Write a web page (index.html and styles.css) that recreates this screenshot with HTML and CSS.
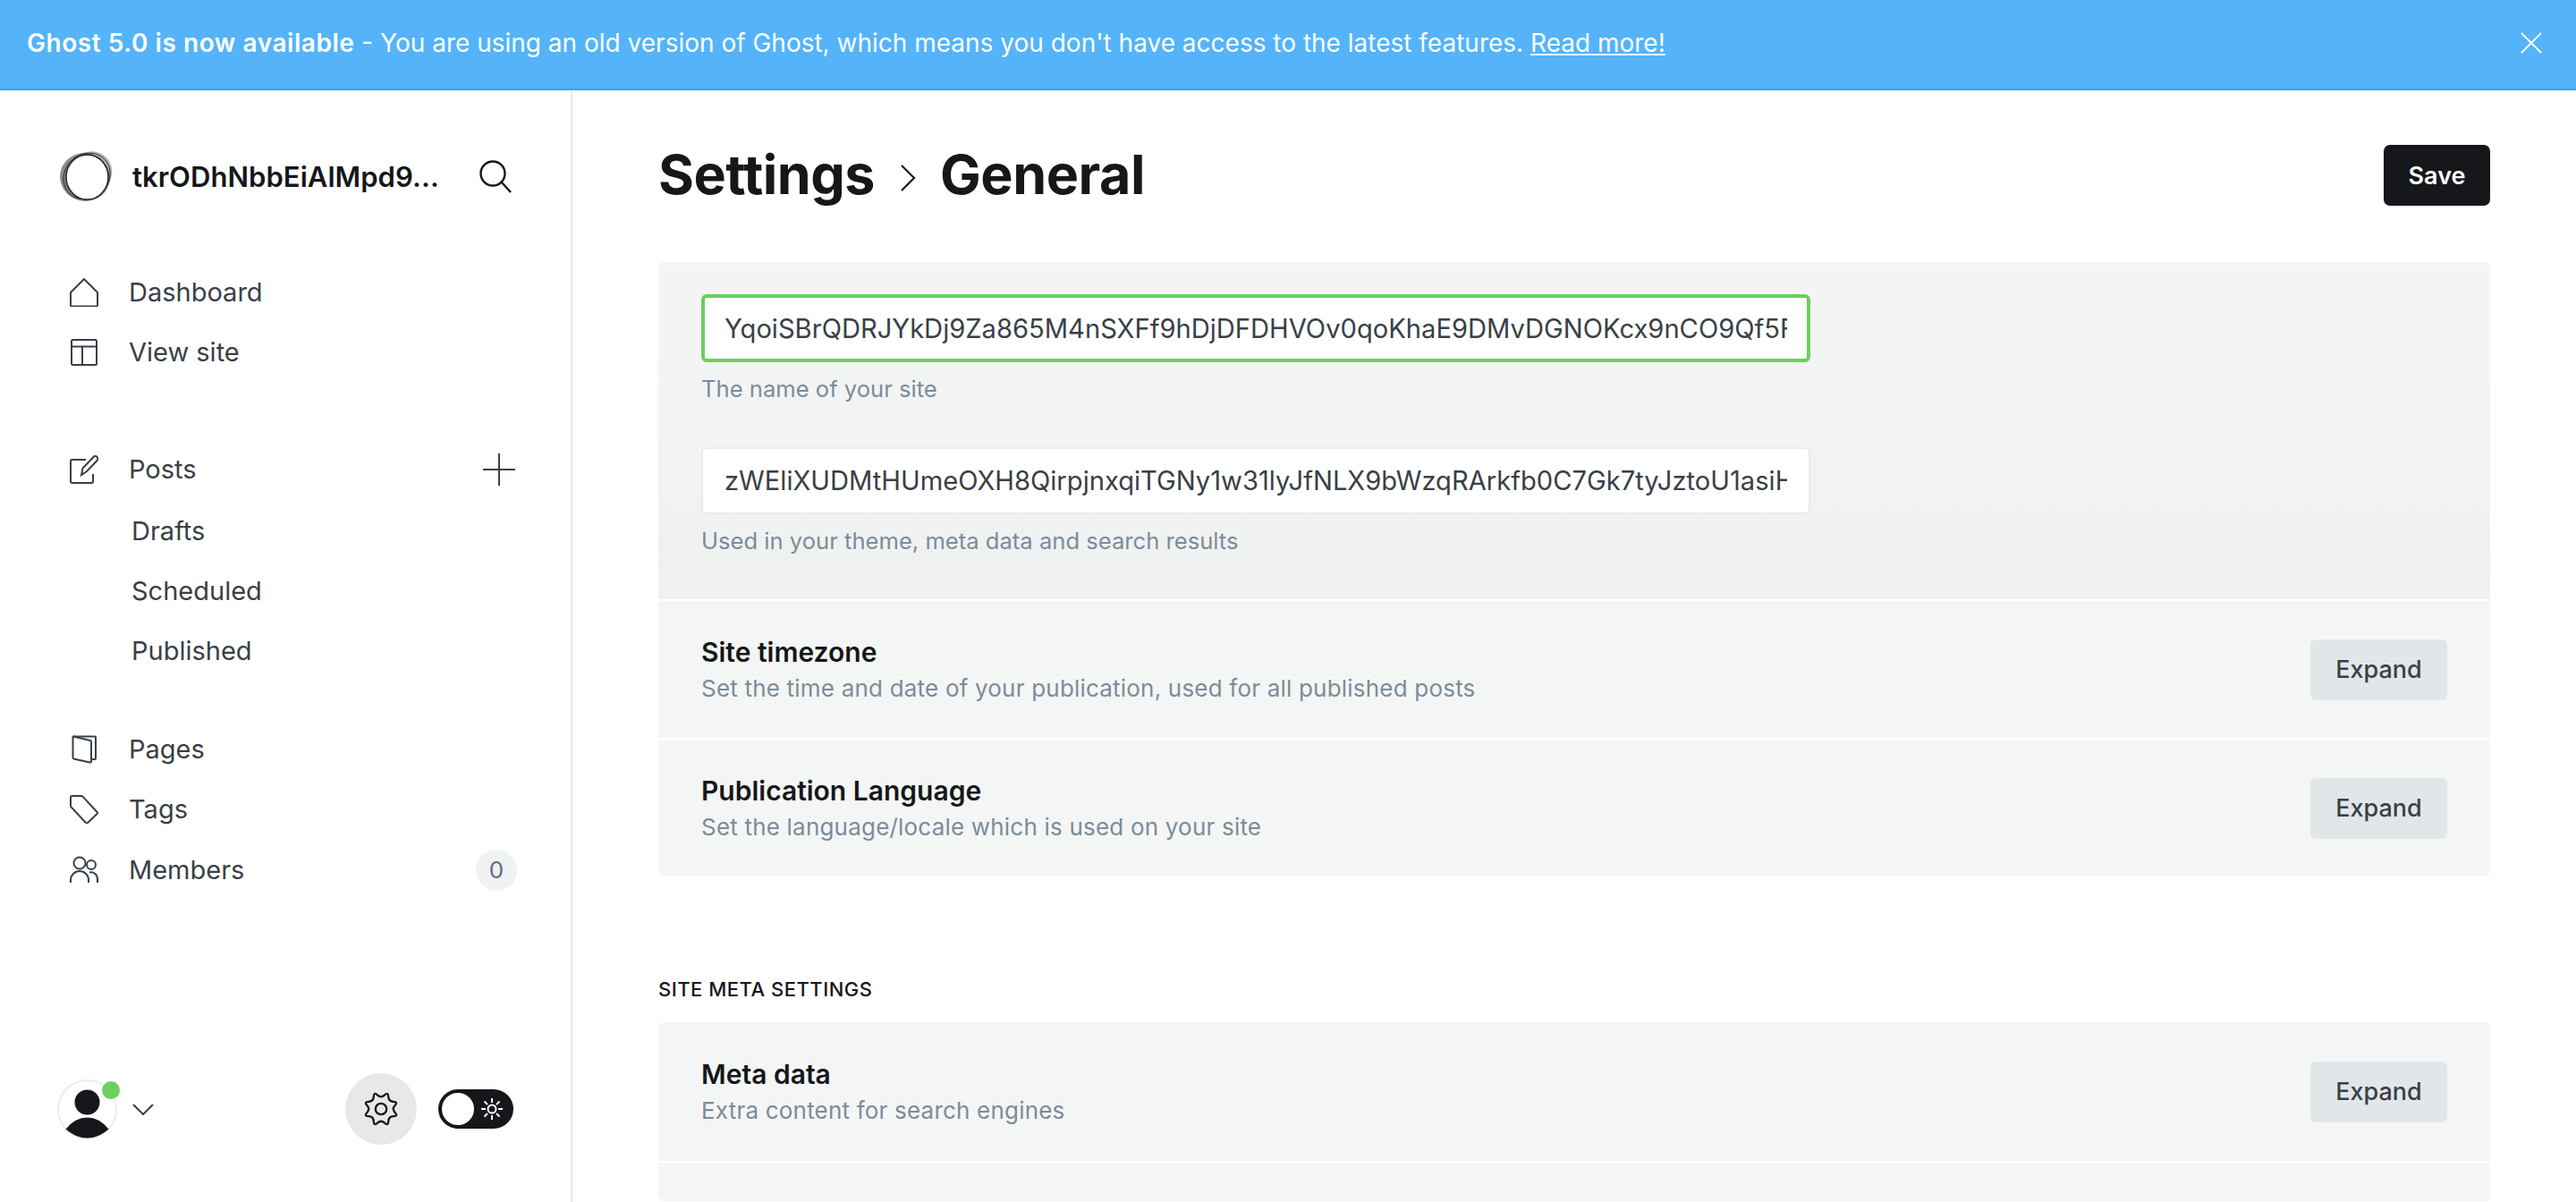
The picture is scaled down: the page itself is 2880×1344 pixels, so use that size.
FILE: index.html
```
<!DOCTYPE html>
<html lang="en">
  <head>
    <meta charset="UTF-8" />
    <title>Settings - General</title>
    <link rel="stylesheet" href="styles.css">
  </head>
  <body>
    <div class="banner">
      <p class="banner-text"><strong>Ghost 5.0 is now available</strong> - You are using an old version of Ghost, which means you don't have access to the latest features. <a href="#">Read more!</a></p>
      <svg class="banner-close" viewBox="0 0 24 24"><path d="M1 1l22 22M23 1L1 23"/></svg>
    </div>

    <div class="app">
      <nav class="sidebar">
        <div class="brand">
          <svg class="brand-logo" viewBox="0 0 60 60">
            <ellipse cx="32" cy="29" rx="29" ry="25" transform="rotate(-42 32 29)" fill="#b4b4b4"/>
            <ellipse cx="29" cy="31" rx="28" ry="27" transform="rotate(15 29 31)" fill="#6f6f6f" opacity=".8"/>
            <ellipse cx="31" cy="30" rx="27.500" ry="24.500" transform="rotate(-42 31 30)" fill="none" stroke="#2c2c2c" stroke-width=".9"/>
            <ellipse cx="31.500" cy="31" rx="23.500" ry="25" fill="#fff" stroke="#232427" stroke-width="1.500"/>
          </svg>
          <span class="brand-name">tkrODhNbbEiAlMpd9...</span>
          <svg class="brand-search" viewBox="0 0 36 37"><circle cx="15" cy="15" r="13.500"/><path d="M25 25l10 11"/></svg>
        </div>

        <ul class="menu">
          <li class="menu-item">
            <svg viewBox="0 0 32 32"><path d="M16 1L31 16v14a1.500 1.500 0 0 1-1.500 1.500h-27A1.500 1.500 0 0 1 1 30V16z"/></svg>
            <span>Dashboard</span>
          </li>
          <li class="menu-item">
            <svg viewBox="0 0 32 32"><rect x="2" y="2" width="28" height="28" rx="1.500"/><path d="M2 9.500h28M14 9.500V30"/></svg>
            <span>View site</span>
          </li>
        </ul>

        <ul class="menu menu-posts">
          <li class="menu-item menu-head">
            <svg viewBox="0 0 32 32"><path d="M18 5H2.500A1.500 1.500 0 0 0 1 6.500v23A1.500 1.500 0 0 0 2.500 31h22a1.500 1.500 0 0 0 1.500-1.500V21"/><path d="M13 22l1.500-7.500L26.500 2c1-1.200 3-1.200 4 0s1 2.800 0 4L19 18z"/></svg>
            <span>Posts</span>
            <svg class="menu-plus" viewBox="0 0 36 36"><path d="M18 0v36M0 18h36"/></svg>
          </li>
          <li class="menu-item menu-sub"><span>Drafts</span></li>
          <li class="menu-item menu-sub"><span>Scheduled</span></li>
          <li class="menu-item menu-sub"><span>Published</span></li>
        </ul>

        <ul class="menu">
          <li class="menu-item">
            <svg viewBox="0 0 32 32"><path d="M4 1.500h24a1 1 0 0 1 1 1V26a1 1 0 0 1-1 1h-4"/><path d="M4 1.500l19 4.500a1.500 1.500 0 0 1 1 1.500v22a1.200 1.200 0 0 1-1.500 1L4.500 26.500A1.500 1.500 0 0 1 3.500 25V2z"/></svg>
            <span>Pages</span>
          </li>
          <li class="menu-item">
            <svg viewBox="0 0 32 32"><path d="M2.500 1h10.500a2 2 0 0 1 1.500.7L30.500 19a1.500 1.500 0 0 1 0 2L20 31a1.500 1.500 0 0 1-2 0L1.700 13.500a2 2 0 0 1-.7-1.500V2.500A1.500 1.500 0 0 1 2.500 1z"/></svg>
            <span>Tags</span>
          </li>
          <li class="menu-item menu-members">
            <svg viewBox="0 0 32 32"><circle cx="11" cy="8" r="6.500"/><path d="M1 30v-3a10 10 0 0 1 20 0v3"/><circle cx="24" cy="10" r="5"/><path d="M22 18.500c5-1 9 2.500 9 7.500v4"/></svg>
            <span>Members</span>
            <span class="menu-count">0</span>
          </li>
        </ul>

        <div class="sidebar-foot">
          <div class="avatar">
            <svg viewBox="0 0 67 67">
              <circle cx="33.500" cy="33.500" r="32.500" fill="#fff" stroke="#ececec" stroke-width="2"/>
              <circle cx="33.500" cy="25.500" r="14" fill="#15171a"/>
              <path d="M9.500 55.500Q20 42.500 33.500 42.500T57.500 55.500Q46 65.500 33.500 65.500T9.500 55.500z" fill="#15171a"/>
            </svg>
            <span class="avatar-dot"></span>
          </div>
          <svg class="foot-chevron" viewBox="0 0 24 13"><path d="M1 1l11 11L23 1"/></svg>
          <span class="foot-gear">
            <svg viewBox="-1 -1 42 42"><circle cx="20" cy="20" r="6.500"/><path d="M15.790 3.585Q20 7.500 24.210 3.585Q28.420 -.33 28.630 5.415Q28.840 11.160 34.585 11.370Q40.330 11.580 36.415 15.790Q32.500 20 36.415 24.210Q40.330 28.420 34.585 28.630Q28.840 28.840 28.630 34.585Q28.420 40.330 24.210 36.415Q20 32.500 15.790 36.415Q11.580 40.330 11.370 34.585Q11.160 28.840 5.415 28.630Q-.33 28.420 3.585 24.210Q7.500 20 3.585 15.790Q-.33 11.580 5.415 11.370Q11.160 11.160 11.370 5.415Q11.580 -.33 15.790 3.585z"/></svg>
          </span>
          <span class="foot-toggle">
            <span class="toggle-knob"></span>
            <svg viewBox="0 0 24 24"><circle cx="12" cy="12" r="4.500"/><path d="M12 0v5M12 19v5M0 12h5M19 12h5M3.500 3.500l3.500 3.500M17 17l3.500 3.500M3.500 20.500L7 17M17 7l3.500-3.500"/></svg>
          </span>
        </div>
      </nav>

      <main class="content">
        <header class="page-head">
          <h1 class="page-title">Settings <svg viewBox="0 0 18 30"><path d="M2 1l14 14L2 29"/></svg> General</h1>
          <button class="btn-save">Save</button>
        </header>

        <section class="panel">
          <div class="panel-open">
            <input class="field field-focus" type="text" value="YqoiSBrQDRJYkDj9Za865M4nSXFf9hDjDFDHVOv0qoKhaE9DMvDGNOKcx9nCO9Qf5FaB">
            <p class="field-help">The name of your site</p>
            <input class="field field-second" type="text" value="zWEliXUDMtHUmeOXH8QirpjnxqiTGNy1w31lyJfNLX9bWzqRArkfb0C7Gk7tyJztoU1asiHq">
            <p class="field-help">Used in your theme, meta data and search results</p>
          </div>
          <div class="row">
            <div>
              <h4 class="row-title">Site timezone</h4>
              <p class="row-desc">Set the time and date of your publication, used for all published posts</p>
            </div>
            <button class="btn-expand">Expand</button>
          </div>
          <div class="row">
            <div>
              <h4 class="row-title">Publication Language</h4>
              <p class="row-desc">Set the language/locale which is used on your site</p>
            </div>
            <button class="btn-expand">Expand</button>
          </div>
        </section>

        <h3 class="section-label">SITE META SETTINGS</h3>

        <section class="panel">
          <div class="row">
            <div>
              <h4 class="row-title">Meta data</h4>
              <p class="row-desc">Extra content for search engines</p>
            </div>
            <button class="btn-expand">Expand</button>
          </div>
          <div class="row row-stub"></div>
        </section>
      </main>
    </div>
  </body>
</html>
```

FILE: styles.css
```
*{
  box-sizing: border-box;
}
html, body{
  height: 100%;
}
body{
  margin: 0;
  display: flex;
  flex-direction: column;
  overflow: hidden;
  background: #fff;
  color: #15171a;
  font-family: Inter, "Noto Sans", sans-serif;
}
p, h1, h3, h4, ul{
  margin: 0;
  padding: 0;
}
ul{
  list-style: none;
}
button{
  border: none;
  font-family: inherit;
  cursor: pointer;
}

/* top banner */
.banner{
  flex: none;
  height: 101px;
  display: flex;
  align-items: center;
  justify-content: space-between;
  padding: 0 38px 3px 30px;
  background: #54b3f9;
  border-bottom: 2px solid #4a9fdf;
  color: #fff;
}
.banner-text{
  font-size: 28px;
}
.banner-text strong{
  font-weight: 600;
  letter-spacing: .55px;
}
.banner-text a{
  color: #fff;
}
.banner-close{
  width: 24px;
  height: 24px;
  fill: none;
  stroke: #fff;
  stroke-width: 1.800;
}

.app{
  flex: 1;
  display: flex;
  min-height: 0;
}

/* sidebar */
.sidebar{
  flex: none;
  width: 640px;
  display: flex;
  flex-direction: column;
  padding: 66px 64px 64px 66px;
  border-right: 2px solid #e8e8e8;
}
.brand{
  display: flex;
  align-items: center;
  height: 60px;
  margin-bottom: 66px;
}
.brand-logo{
  width: 60px;
  height: 60px;
  flex: none;
}
.brand-name{
  margin-left: 22px;
  font-size: 31px;
  font-weight: 600;
  letter-spacing: .05px;
}
.brand-search{
  width: 36px;
  height: 37px;
  margin-left: auto;
  margin-right: 2px;
  fill: none;
  stroke: #15171a;
  stroke-width: 2.400;
}
.menu{
  margin-bottom: 64px;
}
.menu-posts{
  margin-bottom: 43px;
}
.menu-item{
  display: flex;
  align-items: center;
  height: 67px;
  padding-left: 12px;
  font-size: 29px;
  color: #394047;
}
.menu-head{
  height: 69px;
  padding-bottom: 2px;
}
.menu-members{
  margin-top: 1px;
}
.menu-item svg{
  width: 32px;
  height: 32px;
  flex: none;
  margin-right: 34px;
  fill: none;
  stroke: #394047;
  stroke-width: 2;
}
.menu-item svg.menu-plus{
  width: 36px;
  height: 36px;
  margin: 0 -2px 0 auto;
}
.menu-sub{
  padding-left: 81px;
}
.menu-count{
  margin-left: auto;
  margin-right: -4px;
  width: 46px;
  height: 46px;
  border-radius: 50%;
  background: #eff1f3;
  color: #626d79;
  font-size: 26px;
  display: flex;
  align-items: center;
  justify-content: center;
}
.sidebar-foot{
  margin-top: auto;
  display: flex;
  align-items: center;
  height: 80px;
  margin-left: -2px;
}
.avatar{
  position: relative;
  width: 67px;
  height: 67px;
  flex: none;
}
.avatar svg{
  display: block;
  width: 67px;
  height: 67px;
}
.avatar-dot{
  position: absolute;
  top: 2px;
  right: -3px;
  width: 20px;
  height: 20px;
  border-radius: 50%;
  background: #6bd05e;
}
.foot-chevron{
  width: 24px;
  height: 13px;
  margin-left: 17px;
  fill: none;
  stroke: #394047;
  stroke-width: 2;
}
.foot-gear{
  width: 80px;
  height: 80px;
  margin-left: auto;
  border-radius: 50%;
  background: #e7e8ea;
  display: flex;
  align-items: center;
  justify-content: center;
}
.foot-gear svg{
  width: 40px;
  height: 40px;
  fill: none;
  stroke: #15171a;
  stroke-width: 2.400;
}
.foot-toggle{
  width: 84px;
  height: 44px;
  margin-left: 24px;
  padding: 0 12px 0 4px;
  border-radius: 22px;
  background: #15171a;
  display: flex;
  align-items: center;
  justify-content: space-between;
}
.toggle-knob{
  width: 36px;
  height: 36px;
  border-radius: 50%;
  background: #fff;
}
.foot-toggle svg{
  width: 24px;
  height: 24px;
  fill: none;
  stroke: #fff;
  stroke-width: 2;
}

/* main column */
.content{
  flex: 1;
  min-width: 0;
  padding: 61px 96px 0;
}
.page-head{
  display: flex;
  align-items: center;
  justify-content: space-between;
  height: 68px;
  margin-bottom: 63px;
}
.page-title{
  display: flex;
  align-items: center;
  margin-top: -3px;
  font-size: 61px;
  font-weight: 700;
  letter-spacing: -.5px;
}
.page-title svg{
  width: 18px;
  height: 30px;
  margin: 8px 27px 0 28px;
  fill: none;
  stroke: #15171a;
  stroke-width: 2.200;
}
.btn-save{
  width: 119px;
  height: 68px;
  border-radius: 7px;
  background: #15171a;
  color: #fff;
  font-size: 27px;
  font-weight: 600;
}
.panel{
  border-radius: 6px;
  overflow: hidden;
}
.panel-open{
  height: 377px;
  padding: 36px 48px 0;
  background: linear-gradient(#f4f6f5, #eff1f0);
}
.field{
  display: block;
  width: 1240px;
  height: 76px;
  padding: 0 24px;
  border: 2px solid #e9ebea;
  border-radius: 6px;
  outline: none;
  background: #fff;
  color: #394047;
  font-family: inherit;
  font-size: 29.150px;
}
.field-focus{
  padding: 0 22px;
  border: 4px solid #6bd05e;
}
.field-second{
  height: 75px;
  margin-top: 50px;
}
.field-help{
  margin-top: 15px;
  font-size: 25.600px;
  line-height: 30px;
  color: #7c8b9a;
}
.row{
  display: flex;
  align-items: center;
  justify-content: space-between;
  height: 153px;
  margin-top: 2px;
  padding: 0 48px;
  background: #f4f6f5;
}
.panel > .row:first-child{
  height: 155px;
  margin-top: 0;
}
.row-stub{
  height: 43px;
}
.row-title{
  font-size: 30px;
  line-height: 36px;
  font-weight: 600;
  color: #15171a;
}
.row-desc{
  margin-top: 6px;
  font-size: 26px;
  line-height: 34px;
  color: #7c8b9a;
  letter-spacing: .2px;
}
.btn-expand{
  width: 153px;
  height: 68px;
  border-radius: 6px;
  background: #e3e6e9;
  color: #394047;
  font-size: 27px;
  font-weight: 500;
}
.section-label{
  margin: 112px 0 23px;
  font-size: 22px;
  line-height: 28px;
  font-weight: 500;
  letter-spacing: .5px;
  color: #15171a;
}
```
